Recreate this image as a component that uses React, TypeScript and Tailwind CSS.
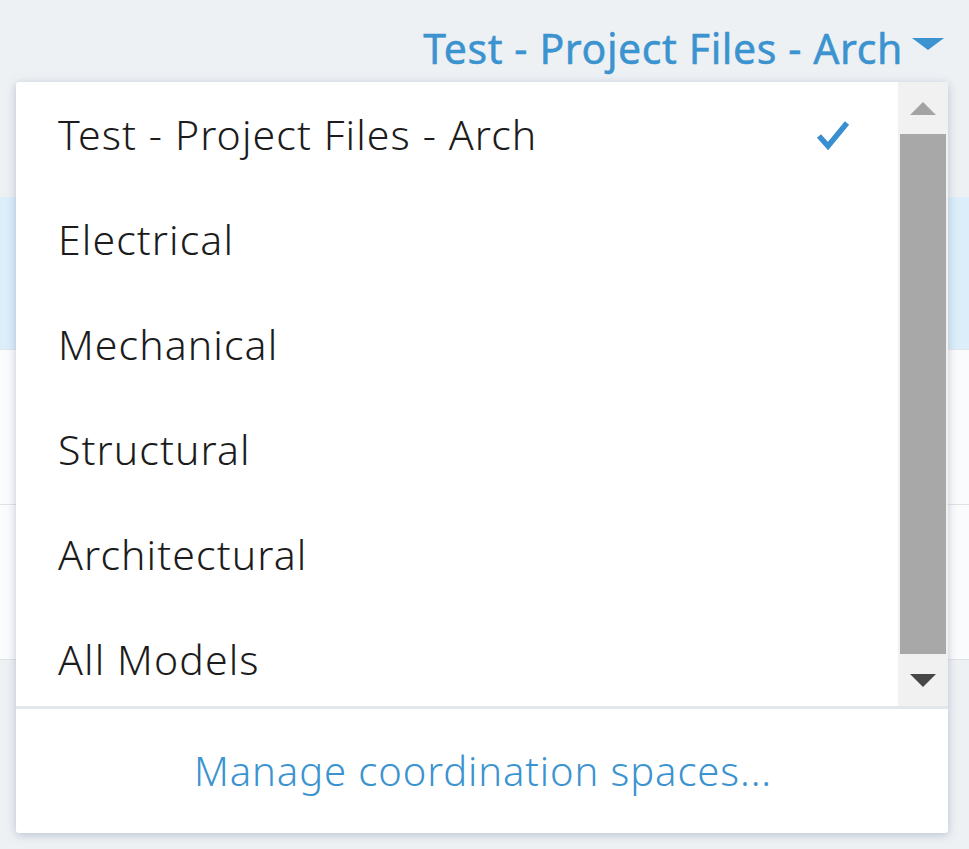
import React from 'react';

const items = ['Test - Project Files - Arch', 'Electrical', 'Mechanical', 'Structural', 'Architectural', 'All Models'];

const font = { fontFamily: '"Noto Sans", "Open Sans", sans-serif' };

export default function App() {
    return (
        <div className="relative w-[969px] h-[849px] overflow-hidden bg-[#eef1f4]" style={font}>
            {/* Page behind the menu */}
            <div className="flex flex-col">
                <div className="h-[197px] bg-[#eef1f4]" />
                <div className="h-[153px] bg-[#dbeef9] border-b border-[#e1e5ea]" />
                <div className="h-[155px] bg-[#fafbfc] border-b border-[#dfe3e8]" />
                <div className="h-[155px] bg-[#fafbfc] border-b border-[#dfe3e8]" />
                <div className="h-[189px] bg-[#eef1f4]" />
            </div>

            {/* Trigger */}
            <div className="absolute top-[28px] right-[24px] flex items-center gap-[8px]">
                <span className="text-[41px] font-normal text-[#3b93cf] leading-none tracking-[0.6px] [-webkit-text-stroke:0.5px_#3b93cf]">Test - Project Files - Arch</span>
                <svg width="34" height="14" viewBox="0 0 34 14" className="mb-[10px]">
                    <path d="M1 1 H33 L17 13 Z" fill="#3b93cf" />
                </svg>
            </div>

            {/* Menu */}
            <div className="absolute left-[16px] top-[82px] w-[932px] bg-white rounded-[3px] shadow-[0_2px_10px_rgba(90,110,140,0.35)] flex flex-col">
                <div className="flex h-[627px] border-b-[3px] border-[#e3e6ea]">
                    <ul className="flex-1 overflow-hidden">
                        {items.map((item, i) => (
                            <li key={item} className="h-[105px] flex items-center justify-between pl-[42px] pr-[48px] text-[41px] font-light tracking-[1.1px] text-[#1c1c1c]">
                                <span>{item}</span>
                                {i === 0 && (
                                    <svg width="34" height="32" viewBox="0 0 34 32">
                                        <path d="M3 17 L12 27 L31 4" fill="none" stroke="#3a8fd0" strokeWidth="5.5" strokeLinejoin="miter" />
                                    </svg>
                                )}
                            </li>
                        ))}
                    </ul>
                    {/* Scrollbar */}
                    <div className="w-[50px] flex flex-col bg-[#f1f1f1]">
                        <div className="h-[52px] flex items-center justify-center">
                            <svg width="26" height="13" viewBox="0 0 26 13"><path d="M13 0 L26 13 H0 Z" fill="#a3a3a3" /></svg>
                        </div>
                        <div className="flex-1 mx-[2px] bg-[#a8a8a8]" />
                        <div className="h-[52px] flex items-center justify-center">
                            <svg width="26" height="13" viewBox="0 0 26 13"><path d="M0 0 H26 L13 13 Z" fill="#474747" /></svg>
                        </div>
                    </div>
                </div>
                <div className="h-[124px] flex items-center justify-center text-[40px] font-light tracking-[0.9px] text-[#3b93cf] pl-[2px]">
                    Manage coordination spaces...
                </div>
            </div>
        </div>
    );
}
